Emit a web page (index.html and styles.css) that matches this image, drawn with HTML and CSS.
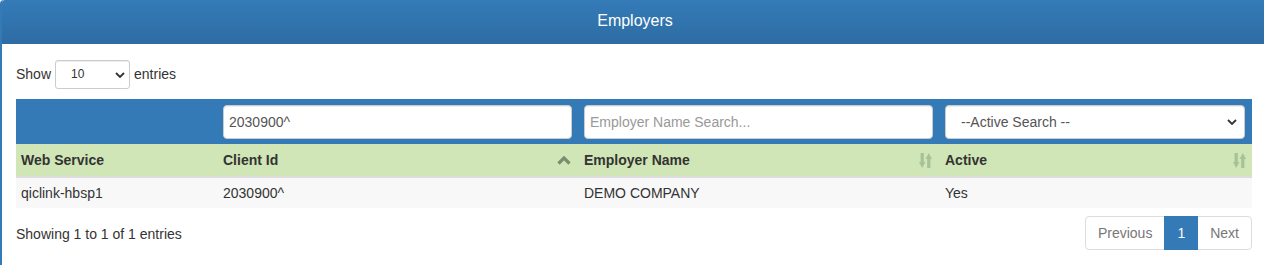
FILE: index.html
```html
<!DOCTYPE html>
<html>
<head>
<meta charset="utf-8">
<link rel="stylesheet" href="styles.css">
</head>
<body>
<div class="panel">
  <div class="panel-heading">Employers</div>
  <div class="panel-body">
    <div class="length-row">
      <span>Show</span>
      <span class="select-wrap sm">
        <select class="length-select"><option>10</option><option>25</option><option>50</option><option>100</option></select>
        <svg class="chev" width="10" height="6" viewBox="0 0 10 6"><path d="M1 1 L5 5 L9 1" fill="none" stroke="#333" stroke-width="1.8"/></svg>
      </span>
      <span>entries</span>
    </div>
    <table class="grid">
      <colgroup><col style="width:202px"><col style="width:361px"><col style="width:361px"><col style="width:312px"></colgroup>
      <thead>
        <tr class="filters">
          <td></td>
          <td><input class="form-control" type="text" value="2030900^"></td>
          <td><input class="form-control" type="text" placeholder="Employer Name Search..."></td>
          <td>
            <span class="select-wrap block">
              <select class="form-control active-select"><option>--Active Search --</option><option>Yes</option><option>No</option></select>
              <svg class="chev big" width="10" height="6" viewBox="0 0 10 6"><path d="M1 1 L5 5 L9 1" fill="none" stroke="#333" stroke-width="1.8"/></svg>
            </span>
          </td>
        </tr>
        <tr class="heads">
          <th><div class="th-in">Web Service</div></th>
          <th><div class="th-in">Client Id
            <svg class="sort-asc" width="14" height="9" viewBox="0 0 14 9"><path d="M1.5 7.5 L7 2 L12.5 7.5" fill="none" stroke="#7c8d6f" stroke-width="3.2"/></svg></div></th>
          <th><div class="th-in">Employer Name
            <svg class="sort-both" width="13" height="15" viewBox="0 0 13 15"><rect x="1.6" y="0" width="3.2" height="10" fill="#a6c298"/><path d="M0 9 L6.4 9 L3.2 15 Z" fill="#a6c298"/><rect x="8.2" y="5" width="3.2" height="10" fill="#a6c298"/><path d="M6.6 6 L13 6 L9.8 0 Z" fill="#a6c298"/></svg></div></th>
          <th><div class="th-in">Active
            <svg class="sort-both" width="13" height="15" viewBox="0 0 13 15"><rect x="1.6" y="0" width="3.2" height="10" fill="#a6c298"/><path d="M0 9 L6.4 9 L3.2 15 Z" fill="#a6c298"/><rect x="8.2" y="5" width="3.2" height="10" fill="#a6c298"/><path d="M6.6 6 L13 6 L9.8 0 Z" fill="#a6c298"/></svg></div></th>
        </tr>
      </thead>
      <tbody>
        <tr class="row">
          <td>qiclink-hbsp1</td>
          <td>2030900^</td>
          <td>DEMO COMPANY</td>
          <td>Yes</td>
        </tr>
      </tbody>
    </table>
    <div class="footer-row">
      <div class="info">Showing 1 to 1 of 1 entries</div>
      <ul class="pagination">
        <li class="pg disabled">Previous</li>
        <li class="pg current">1</li>
        <li class="pg disabled">Next</li>
      </ul>
    </div>
  </div>
</div>
</body>
</html>
```

FILE: styles.css
```css
html, body {
  margin: 0;
  padding: 0;
  overflow: hidden;
  background: #fff;
}
body {
  font-family: "Liberation Sans", Arial, sans-serif;
  font-size: 14px;
  line-height: 20px;
  color: #333;
}
.panel {
  margin-right: -4px;
  border-left: 2px solid #337ab7;
  border-top-left-radius: 4px;
  background: #fff;
}
.panel-heading {
  height: 44px;
  line-height: 42px;
  text-align: center;
  color: #fff;
  font-size: 16px;
  background: linear-gradient(to bottom, #347bb8 0%, #2e6ca3 100%);
  border-top-left-radius: 3px;
}
.panel-body {
  padding: 15px 15px 15px 14px;
}
.length-row {
  display: flex;
  align-items: center;
  height: 30px;
  margin-bottom: 10px;
}
.select-wrap {
  position: relative;
  display: inline-block;
}
.select-wrap.sm {
  margin: 0 4px 0 4px;
}
.select-wrap.block {
  display: block;
}
.chev {
  position: absolute;
  right: 5px;
  top: 12px;
  pointer-events: none;
}
.chev.big {
  right: 8px;
  top: 14px;
}
.length-select {
  -webkit-appearance: none;
  appearance: none;
  width: 75px;
  height: 29px;
  padding: 0 0 0 15px;
  font-family: "Liberation Sans", Arial, sans-serif;
  font-size: 12px;
  color: #333;
  background: #fff;
  border: 1px solid #ccc;
  border-radius: 3px;
  box-sizing: border-box;
  box-shadow: inset 0 1px 1px rgba(0,0,0,.075);
}
.grid {
  width: 1236px;
  table-layout: fixed;
  border-collapse: collapse;
  border-spacing: 0;
}
.filters td {
  background: #337ab7;
  padding: 6px 7px 5px 5px;
}
.form-control {
  display: block;
  width: 100%;
  height: 34px;
  box-sizing: border-box;
  padding: 0 5px;
  font-family: "Liberation Sans", Arial, sans-serif;
  font-size: 14px;
  color: #555;
  background: #fff;
  border: 1px solid #ccc;
  border-radius: 4px;
  box-shadow: inset 0 1px 1px rgba(0,0,0,.075);
  outline: none;
}
.form-control::placeholder {
  color: #999;
}
.active-select {
  -webkit-appearance: none;
  appearance: none;
  padding-left: 15px;
}
.heads th {
  background: #d0e6b6;
  text-align: left;
  font-weight: bold;
  padding: 6px 8px 6px 5px;
  border-bottom: 2px solid #ddd;
}
.heads th:last-child {
  padding-right: 6px;
}
.th-in {
  display: flex;
  align-items: center;
  justify-content: space-between;
  height: 20px;
}
.sort-asc {
  margin-top: 1px;
}
.row td {
  background: #f8f8f8;
  padding: 5px;
}
.footer-row {
  display: flex;
  justify-content: space-between;
  align-items: center;
  margin-top: 8px;
  width: 1236px;
}
.info {
  line-height: 20px;
  padding-top: 1px;
}
.pagination {
  display: flex;
  list-style: none;
  margin: 0;
  padding: 0;
}
.pg {
  padding: 6px 12px;
  line-height: 20px;
  border: 1px solid #ddd;
  margin-left: -1px;
  color: #777;
  background: #fff;
}
.pg:first-child {
  border-radius: 4px 0 0 4px;
}
.pg:last-child {
  border-radius: 0 4px 4px 0;
}
.pg.current {
  background: #337ab7;
  border-color: #337ab7;
  color: #fff;
  position: relative;
}
```
